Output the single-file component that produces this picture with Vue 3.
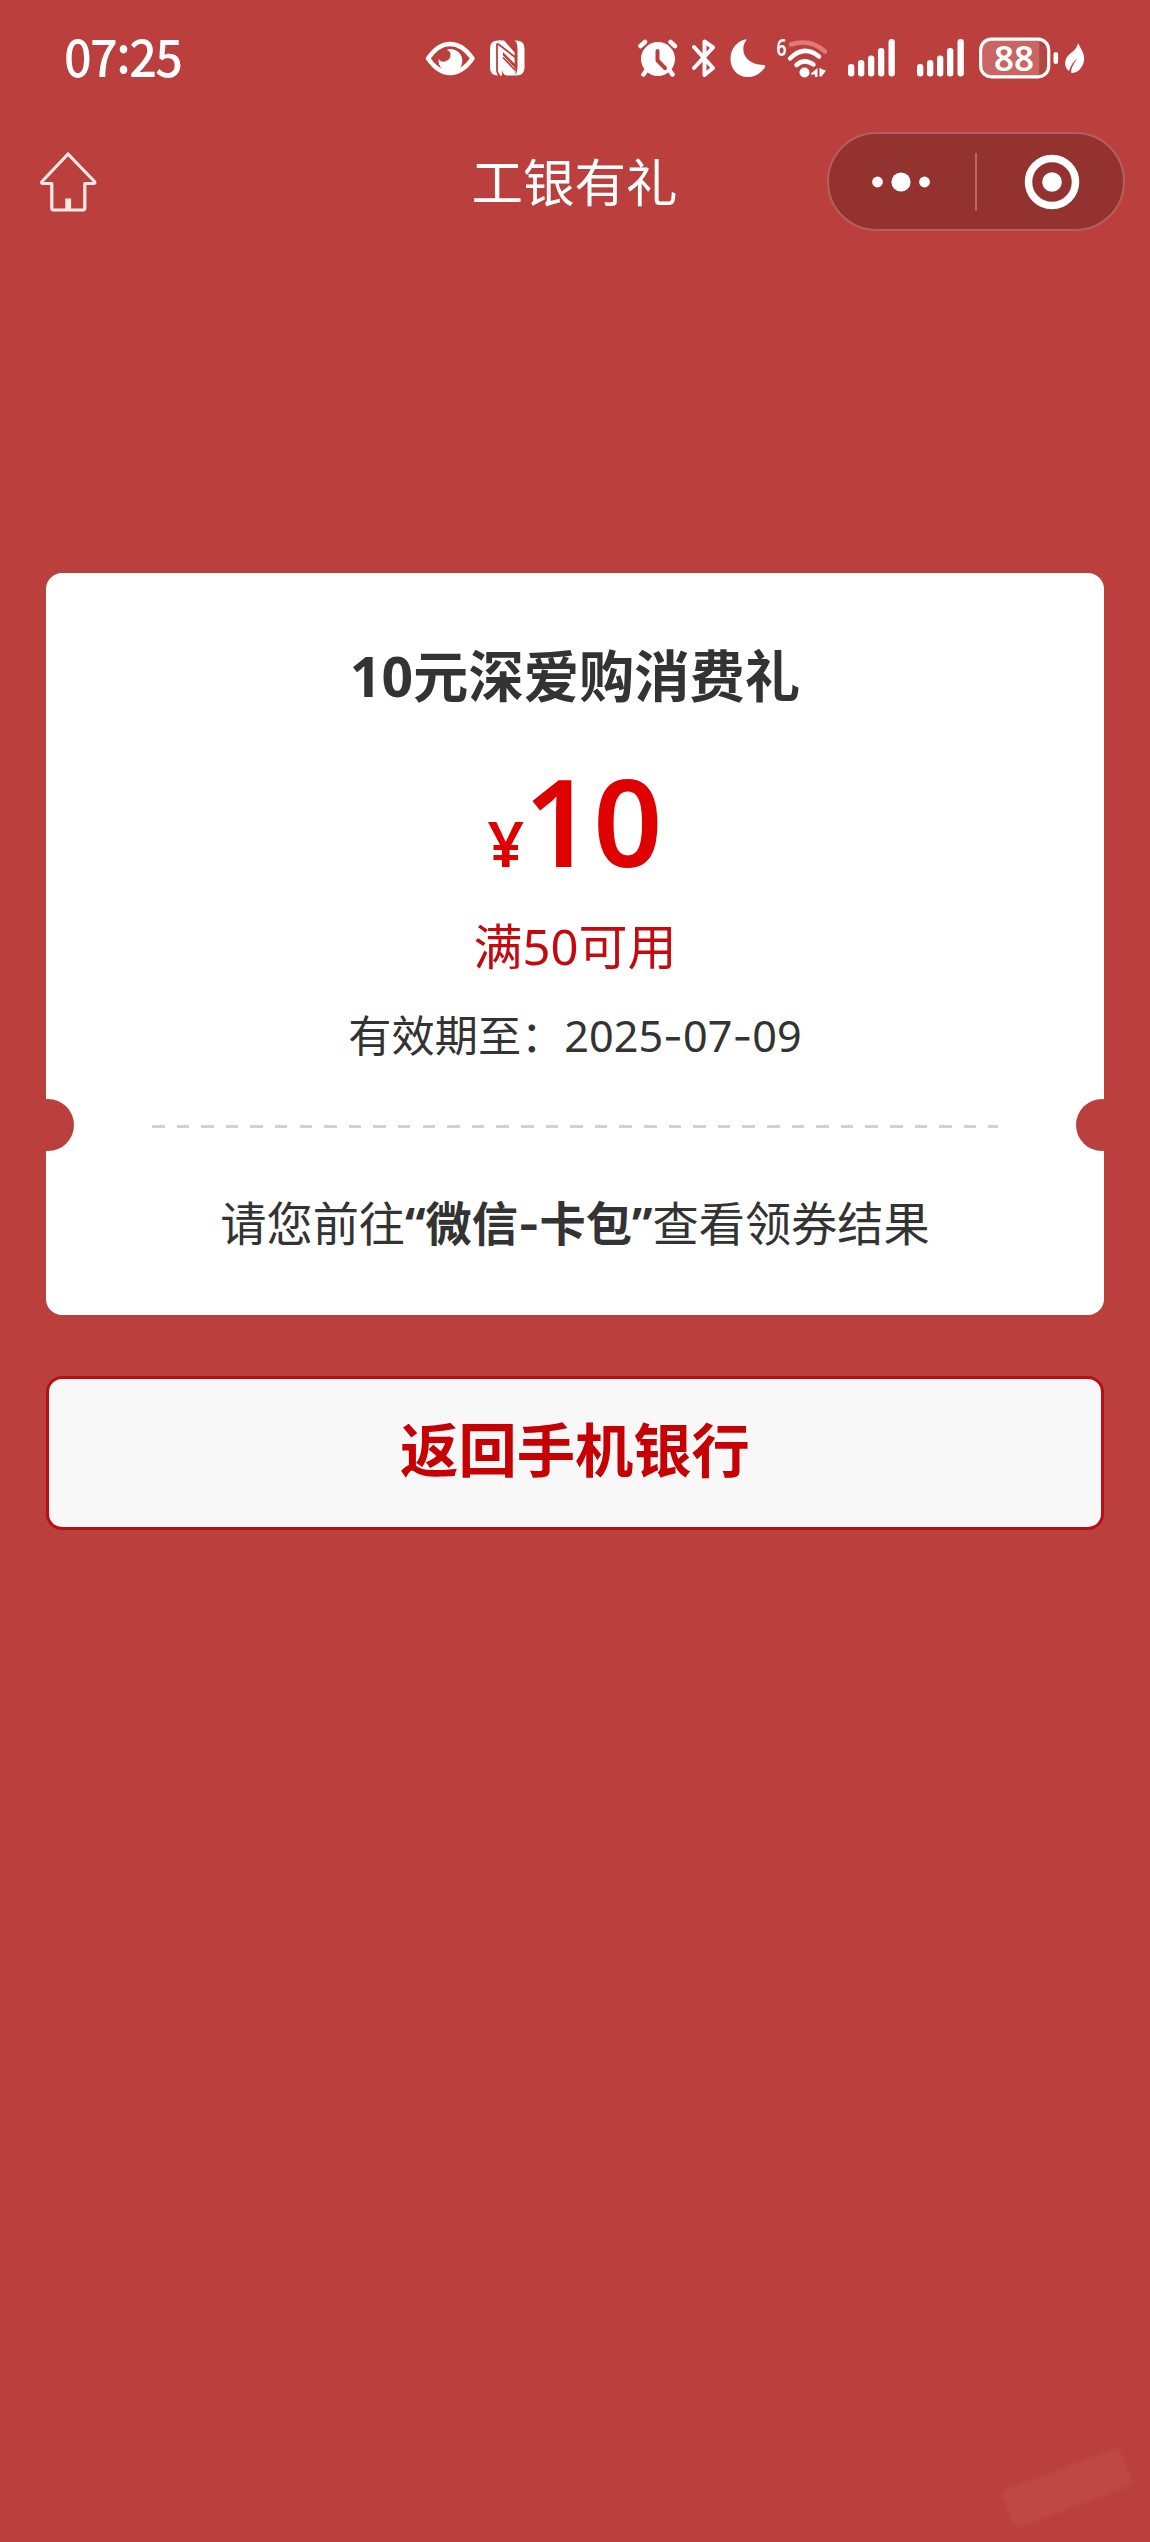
<script setup>
const bars = [
  { x: 0, top: 25 },
  { x: 10, top: 21 },
  { x: 20, top: 16.5 },
  { x: 30, top: 9 },
  { x: 40.5, top: 0 },
]
const coupon = {
  title: '10元深爱购消费礼',
  amount: '10',
  rule: '满50可用',
  expires: ['2025', '07', '09'],
}
</script>

<template>
  <div class="page">
    <header class="status">
      <div class="time">07<span class="colon">:</span>25</div>

      <svg class="eye" width="50" height="36" viewBox="425 39 50 36">
        <path d="M428 57.5Q438 43 450 43Q462.500 43 472.500 57.500Q462.500 72 450 72Q438 72 428 57.500Z" fill="none" stroke="#fff" stroke-width="4.400" stroke-linejoin="round" />
        <path d="M448.500 48.200A11.800 11.800 0 1 1 438.800 58Q440.500 61.600 445 60.500Q451 58.500 450.500 53Q450.200 50 447 49Z" fill="#fff" />
      </svg>
      <svg class="nfc" width="35" height="36" viewBox="490 39.500 35 36">
        <path d="M498 40H501V75H498Q490 75 490 67V48Q490 40 498 40Z" fill="#fff" />
        <path d="M516 40Q524.500 40 524.500 48V67Q524.500 75 516 75L515 75Q517.500 72 517.500 66V48Q517.500 43 514.500 40Z" fill="#fff" />
        <path d="M499 40H504L515.500 53V64L503 51.500V55L515.500 68V75H506.500Q502 74 502 68V75H499Z" fill="#fff" />
        <path d="M497 43V70Q497.500 74 500 75.500M497.500 43L515.500 57M503 57L515.500 70M515.500 41V68" fill="none" stroke="#bb403d" stroke-width="1.800" />
      </svg>

      <svg class="alarm" width="40" height="38" viewBox="638 38.500 40 38">
        <circle cx="658" cy="58.500" r="17" fill="#fff" />
        <path d="M640.500 45.500L645 41.500M675 45.500L670.500 41.500M647 69L643.500 74M669 69L672.500 74" stroke="#fff" stroke-width="4.500" stroke-linecap="round" />
        <path d="M657.500 50.500V60L665 67.500" fill="none" stroke="#bb403d" stroke-width="4" stroke-linecap="round" stroke-linejoin="round" />
      </svg>
      <svg class="bluetooth" width="24" height="38" viewBox="692 38.500 24 38">
        <path d="M694 46.500L713 67.500L704.500 74.500V62M694 67.500L713 47L704.500 41V53" fill="none" stroke="#fff" stroke-width="4" stroke-linecap="round" stroke-linejoin="round" />
      </svg>
      <svg class="moon" width="36" height="38" viewBox="729.500 38.500 36 38">
        <path d="M746 39.500C739 48 743 64 763 64.500C765 64.500 765 66 764 67.500C759 74 753 76.500 747 76.500C737 76.500 730 68.500 730 58.500C730 48.500 736 41 744.500 39C746 38.700 746.500 39 746 39.500Z" fill="#fff" />
      </svg>
      <svg class="wifi" width="53" height="60" viewBox="776 27 53 60">
        <text x="776.500" y="55" class="gen" textLength="10" lengthAdjust="spacingAndGlyphs">6</text>
        <path d="M791 43.500Q810 37.500 825 50.500" fill="none" stroke="#e17a77" stroke-width="4.500" stroke-linecap="round" />
        <path d="M790 57.500Q804 43.500 819 55.500" fill="none" stroke="#fff" stroke-width="4.500" stroke-linecap="round" />
        <path d="M796.500 64Q804 57 813.500 63.500" fill="none" stroke="#fff" stroke-width="4.500" stroke-linecap="round" />
        <circle cx="804.500" cy="71.500" r="5" fill="#fff" />
        <path d="M811 72.500L817.500 67V76H815V73.500H811ZM819.500 67H821V68L826 69.500L821.500 75.500H819.500Z" fill="#fff" />
      </svg>
      <svg v-for="n in 2" :key="n" class="signal" width="47" height="38" viewBox="0 0 47 38">
        <rect v-for="b in bars" :key="b.x" :x="b.x" :y="b.top" width="6.300" :height="37.500 - b.top" rx="3" fill="#fff" />
      </svg>
      <svg class="battery" width="80" height="62" viewBox="978.500 27 80 62">
        <rect x="982" y="40" width="57" height="36" fill="#c96563" />
        <rect x="1039" y="40" width="8" height="36" fill="#b04745" />
        <rect x="980.200" y="39.200" width="68" height="37.600" rx="10.500" fill="none" stroke="#fff" stroke-width="3.200" />
        <rect x="1053" y="52" width="4.600" height="12" rx="2.300" fill="#fff" />
        <text x="993.500" y="71" class="level" textLength="40">88</text>
      </svg>
      <svg class="leaf" width="20" height="32" viewBox="1064.500 41.500 20 32">
        <path d="M1077.500 42.500C1080 48 1084.500 53 1083.500 60C1082.500 67 1077 72.500 1071.500 72.500L1070.500 72C1071 66 1074 62 1077 57.500C1073 61 1070 65 1068.500 70.500C1064 67.500 1063.500 61 1066.500 56.500C1069.500 52 1076.500 50 1077.500 42.500Z" fill="#fff" />
      </svg>
    </header>

    <nav class="nav">
      <svg class="home" width="58" height="60" viewBox="39 170 58 60">
        <path d="M68 172L42 199.500Q41 201.500 43 201.500H51.800V226Q51.800 228 53.500 228H83Q84.800 228 84.800 226V201.500H93.500Q95.500 201.500 94.500 199.500Z" fill="none" stroke="#ffe9e6" stroke-width="3.200" stroke-linejoin="round" />
        <rect x="65.300" y="216.500" width="5.800" height="11" fill="#ffe9e6" />
      </svg>
      <h1>工银有礼</h1>
      <div class="capsule">
        <svg width="60" height="24" viewBox="0 0 60 24">
          <circle cx="6.500" cy="12" r="5.400" fill="#fff" />
          <circle cx="30" cy="12" r="9.600" fill="#fff" />
          <circle cx="53.500" cy="12" r="5.400" fill="#fff" />
        </svg>
        <i class="divider"></i>
        <svg width="56" height="56" viewBox="0 0 56 56">
          <circle cx="28" cy="28" r="23.500" fill="none" stroke="#fff" stroke-width="7.500" />
          <circle cx="28" cy="28" r="9.800" fill="#fff" />
        </svg>
      </div>
    </nav>

    <main>
      <section class="card">
        <h2>{{ coupon.title }}</h2>
        <p class="amount"><span class="yen">¥</span>{{ coupon.amount }}</p>
        <p class="rule">{{ coupon.rule }}</p>
        <p class="expires">有效期至：<template v-for="(part, i) in coupon.expires" :key="i"><span v-if="i" class="dash">-</span>{{ part }}</template></p>
        <div class="tear"></div>
        <p class="notice">请您前往<b>“微信<span class="dash">-</span>卡包”</b>查看领券结果</p>
        <i class="notch left"></i>
        <i class="notch right"></i>
      </section>
      <button type="button">返回手机银行</button>
    </main>

    <i class="smudge"></i>
  </div>
</template>

<style>
body {
  margin: 0;
  background: #bb403d;
}
</style>

<style scoped>
.page {
  position: relative;
  box-sizing: border-box;
  width: 1150px;
  height: 2542px;
  overflow: hidden;
  background: #bb403d;
  color: #333;
  font-family: "Noto Sans", "Noto Sans CJK SC", sans-serif;
}
svg {
  display: block;
  flex: none;
}
h1, h2, p {
  margin: 0;
  font-weight: 400;
  white-space: nowrap;
}
.status {
  display: flex;
  align-items: center;
  height: 115px;
  padding-left: 64px;
}
.time {
  width: 361px;
  margin-top: -5px;
  color: #fff;
  font: 500 52px/60px "Noto Sans CJK SC", sans-serif;
  letter-spacing: -1.700px;
  transform: scaleX(0.935);
  transform-origin: 0 50%;
}
.colon {
  position: relative;
  top: -4px;
}
.nfc { margin-left: 15px; }
.alarm { margin-left: 113px; }
.bluetooth { margin-left: 14px; }
.moon { margin-left: 13.500px; }
.wifi { margin-left: 10.500px; }
.signal { margin-left: 19px; }
.signal + .signal { margin-left: 22px; }
.battery { margin-left: 14.500px; }
.leaf { margin-left: 6px; }
.gen {
  fill: #fff;
  font: 600 23px "Noto Sans", sans-serif;
}
.level {
  fill: #fff;
  font: 600 35px "Noto Sans", sans-serif;
}
.nav {
  display: grid;
  grid-template-columns: 1fr auto 1fr;
  align-items: center;
  height: 116px;
  margin-bottom: 342px;
  padding: 0 25px 0 39px;
}
.nav h1 {
  padding-right: 15px;
  color: #fff;
  font-size: 51.500px;
  line-height: 60px;
}
.home, .nav h1 {
  margin-top: 17px;
}
.capsule {
  display: flex;
  box-sizing: border-box;
  align-items: center;
  justify-self: end;
  width: 298px;
  height: 99px;
  margin-top: 17px;
  padding-left: 42px;
  border: 2px solid #b55f5d;
  border-radius: 50px;
  background: #943230;
}
.divider {
  width: 2px;
  height: 58px;
  margin: 0 47.500px 0 43.500px;
  background: #b86562;
}
main {
  padding: 0 46px;
}
.card {
  position: relative;
  height: 742px;
  border-radius: 16px;
  background: #fff;
  text-align: center;
}
.card h2 {
  padding-top: 63px;
  font-size: 55.300px;
  font-weight: 700;
  line-height: 80px;
}
.amount {
  margin-top: 34px;
  color: #df0000;
  font-size: 121px;
  font-weight: 600;
  line-height: 140px;
}
.yen {
  font-size: 64px;
  line-height: 1;
}
.rule {
  margin-top: 23px;
  color: #c40a0e;
  font-size: 49px;
  line-height: 66px;
}
.expires {
  margin-top: 29px;
  font-size: 43.200px;
  line-height: 56px;
}
.dash {
  font-family: Inter, sans-serif;
  line-height: 1;
}
.tear {
  height: 3px;
  margin: 61px 106px 0;
  background: repeating-linear-gradient(90deg, #d2d2d2 0 12.500px, transparent 12.500px 24.600px);
}
.notice {
  margin-top: 66px;
  font-size: 46.200px;
  line-height: 60px;
}
.notch {
  position: absolute;
  top: 526px;
  width: 52px;
  height: 52px;
  border-radius: 50%;
  background: #bb403d;
}
.left { left: -24px; }
.right { right: -24px; }
button {
  display: block;
  box-sizing: border-box;
  width: 100%;
  height: 154px;
  margin-top: 61px;
  padding: 0 0 13px;
  border: 3px solid #b61014;
  border-radius: 16px;
  background: #f8f8f8;
  color: #c60003;
  font: 700 58.300px/70px "Noto Sans CJK SC", sans-serif;
}
.smudge {
  position: absolute;
  right: 20px;
  bottom: 34px;
  width: 126px;
  height: 40px;
  border-radius: 7px;
  background: #be4844;
  filter: blur(1px);
  transform: rotate(-20.500deg);
}
</style>
